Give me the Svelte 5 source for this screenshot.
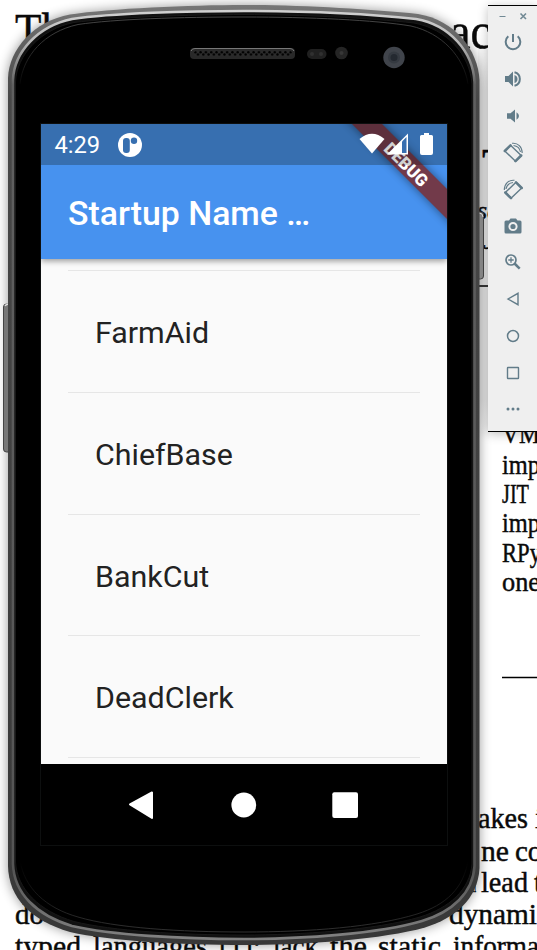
<script>
  const names = ['FarmAid', 'ChiefBase', 'BankCut', 'DeadClerk'];
  const tools = ['power', 'volumeUp', 'volumeDown', 'rotateLeft', 'rotateRight', 'camera', 'zoom', 'back', 'home', 'overview', 'more'];
  const lines = [
    { x: 15, y: 48, size: 50, text: 'Th', w: 48 },
    { x: 450, y: 48, size: 51, text: 'ac', w: 41 },
    { x: 482, y: 181, size: 46, text: 'T' },
    { x: 477, y: 219, size: 26, text: 'sc', italic: true },
    { x: 483, y: 249, size: 28, text: 'J', italic: true },
    { x: 502, y: 443, size: 26, text: 'VM', w: 38 },
    { x: 502, y: 474, size: 28, text: 'imp', w: 38 },
    { x: 502, y: 503, size: 27, text: 'JIT', w: 27 },
    { x: 502, y: 532, size: 28, text: 'imp', w: 38 },
    { x: 502, y: 562, size: 27, text: 'RPy', w: 39 },
    { x: 502, y: 591, size: 28, text: 'one', w: 38 },
    { x: 478, y: 828, size: 29, text: 'akes', w: 50 },
    { x: 535, y: 828, size: 29, text: 'it' },
    { x: 481, y: 861, size: 29, text: 'ne', w: 28 },
    { x: 515, y: 861, size: 29, text: 'com' },
    { x: 472, y: 892, size: 29, text: 'n', w: 4 },
    { x: 481, y: 892, size: 29, text: 'lead', w: 47 },
    { x: 534, y: 892, size: 29, text: 'to' },
    { x: 15, y: 924, size: 29, text: 'do' },
    { x: 449, y: 924, size: 29, text: 'dynami', w: 88 },
    { x: 15, y: 956, size: 29, text: 'typed', w: 66 },
    { x: 93, y: 956, size: 29, text: 'languages', w: 114 },
    { x: 219, y: 956, size: 29, text: '[1]:' },
    { x: 273, y: 956, size: 29, text: 'lack', w: 45 },
    { x: 330, y: 956, size: 29, text: 'the', w: 37 },
    { x: 378, y: 956, size: 29, text: 'static', w: 63 },
    { x: 453, y: 956, size: 29, text: 'informa', w: 86 }
  ];
  const outer = 'M8 78C9 49 34 21 70 14.500C110 8.500 190 5 244 5C300 5 370 9 418 14C455 20 478 50 479.500 80V868C478 899 455 918 425 927.500C380 940 300 945 244 945C180 945 110 941 70 932C30 920 9 898 8 866Z';
  const rim = 'M13 80C14 52 38 26 72 19C112 13 190 11 244 11C300 11 370 14 416 19C450 25 473 52 474.500 82V866C473 893 452 912 422 921C378 934 300 939 244 939C180 939 112 935 72 926C36 915 14 893 13 864Z';
  const glass = 'M15.500 82C16.500 55 41 29 74 22.500C112 17.500 190 14.500 244 14.500C300 14.500 370 18 414 23C447 29 470 55 472 84V864C470 890 449 908 420 917C376 930 300 935 244 935C180 935 112 931 74 921.500C39 911 17 889 15.500 862Z';
</script>

<main class="desktop">
  <svg class="layer" width="537" height="950" viewBox="0 0 537 950">
    <g class="paper">
      {#each lines as l}
        <text x={l.x} y={l.y} font-size={l.size} font-style={l.italic ? 'italic' : 'normal'} textLength={l.w} lengthAdjust="spacingAndGlyphs">{l.text}</text>
      {/each}
      <path d="M478 286H500M502 677.500H537" stroke="#000" stroke-width="1.300" />
    </g>
  </svg>

  <svg class="layer" width="537" height="950" viewBox="0 0 537 950">
    <defs>
      <linearGradient id="metal" x1="0" y1="5" x2="0" y2="945" gradientUnits="userSpaceOnUse">
        <stop offset="0" stop-color="#777" /><stop offset=".05" stop-color="#5c5c5c" />
        <stop offset=".1" stop-color="#484848" /><stop offset="1" stop-color="#383838" />
      </linearGradient>
      <linearGradient id="shine" x1="0" y1="5" x2="0" y2="945" gradientUnits="userSpaceOnUse">
        <stop offset="0" stop-color="#d5d5d5" /><stop offset=".04" stop-color="#b8b8b8" />
        <stop offset=".085" stop-color="#606060" /><stop offset=".92" stop-color="#555" /><stop offset="1" stop-color="#858585" />
      </linearGradient>
      <linearGradient id="bevel" x1="0" y1="15" x2="0" y2="935" gradientUnits="userSpaceOnUse">
        <stop offset="0" stop-color="#484848" /><stop offset=".04" stop-color="#2a2a2a" /><stop offset=".08" stop-color="#000" />
        <stop offset=".92" stop-color="#000" /><stop offset="1" stop-color="#333" />
      </linearGradient>
      <linearGradient id="gap" x1="0" y1="0" x2="0" y2="1">
        <stop offset="0" stop-color="#000" stop-opacity="0" /><stop offset=".15" stop-color="#000" stop-opacity=".08" />
        <stop offset=".9" stop-color="#000" stop-opacity=".08" /><stop offset="1" stop-color="#000" stop-opacity="0" />
      </linearGradient>
      <pattern id="mesh" x="194" y="51" width="5.300" height="5" patternUnits="userSpaceOnUse">
        <rect width="5.300" height="5" fill="#2b2b2b" /><circle cx="1.300" cy="1.300" r="1.200" fill="#000" /><circle cx="4" cy="3.500" r="1.200" fill="#000" />
      </pattern>
      <filter id="soft" x="-10%" y="-10%" width="120%" height="120%"><feGaussianBlur stdDeviation="6" /></filter>
    </defs>
    <rect x="478" y="30" width="12" height="410" fill="url(#gap)" />
    <path d={outer} fill="#000" opacity=".4" filter="url(#soft)" />
    <rect x="3.500" y="304" width="8" height="148" rx="3" fill="#777" stroke="#444" />
    <path d="M5 306q1-2 4-2" stroke="#ddd" stroke-width="1.500" fill="none" />
    <rect x="476" y="212" width="7.500" height="67" rx="3" fill="#888" stroke="#444" />
    <path d="M479 213q4 0 4 4" stroke="#ddd" fill="none" />
    <path d={outer} fill="url(#metal)" />
    <path d={rim} fill="#111" stroke="url(#shine)" stroke-width="2.600" />
    <path d={glass} fill="#000" stroke="#181818" stroke-width="1" />
    <path d="M20 84C23 56 44 32 78 24.500C115 19 180 17 244 17C310 17 375 20 411 26C442 33 464 57 468 84" fill="none" stroke="url(#bevel)" stroke-width="1" />
    <path d="M20 860C24 888 46 908 78 917C115 928 180 932 244 932C310 932 375 927 417 914C446 905 464 888 468 860" fill="none" stroke="url(#bevel)" stroke-width="1" />
    <rect x="190" y="48" width="105" height="11" rx="4" fill="#292929" />
    <path d="M191 51q1-2.500 4-2.500H290q3 0 4 2.500" fill="none" stroke="#777" stroke-width="1" />
    <rect x="194" y="51" width="98" height="5" rx="2" fill="url(#mesh)" />
    <rect x="307" y="49" width="19.500" height="10" rx="5" fill="#202020" />
    <circle cx="312" cy="54" r="2" fill="#303030" /><circle cx="321" cy="54" r="2" fill="#303030" />
    <circle cx="341.500" cy="53" r="6.300" fill="#252525" /><circle cx="341.500" cy="53" r="2" fill="#373737" />
    <circle cx="394" cy="57.500" r="10.700" fill="#40444b" /><circle cx="394" cy="57.500" r="6" fill="#353a41" /><circle cx="394" cy="57.500" r="3.500" fill="#242930" />
  </svg>

  <section class="screen">
    <header>
      <div class="status">
        <time>4:29</time>
        <svg width="24" height="24" viewBox="0 0 24 24"><circle cx="12" cy="12" r="12" fill="#fff" /><rect x="5" y="5" width="6.800" height="15" rx="3" fill="#376fb0" /><circle cx="16" cy="7.700" r="3.200" fill="#376fb0" /></svg>
      </div>
      <h1>Startup Name …</h1>
    </header>
    <ul>
      {#each names as name}
        <li>{name}</li>
      {/each}
      <li class="last"></li>
    </ul>
    <nav>
      <svg width="406" height="80" viewBox="0 0 406 80" fill="#fff">
        <path d="M89 40.500 111 28.500V54Z" stroke="#fff" stroke-width="2" stroke-linejoin="round" />
        <circle cx="202.800" cy="41" r="12.400" /><rect x="291.300" y="28.300" width="25.700" height="25.700" rx="2" />
      </svg>
    </nav>
    <svg class="banner" width="110" height="110" viewBox="337 124 110 110">
      <defs><filter id="ribbonShadow" x="-20%" y="-20%" width="140%" height="140%"><feGaussianBlur stdDeviation="5" /></filter></defs>
      <path d="M342 114H372L457 199V229Z" fill="#000" opacity=".48" filter="url(#ribbonShadow)" />
      <path d="M352 124H382L447 189V219Z" fill="#723a4a" />
      <text x="406" y="170.500" transform="rotate(45 406 164.500)" text-anchor="middle" textLength="54" lengthAdjust="spacingAndGlyphs">DEBUG</text>
      <path d="M352 124H382L423 165H393Z" fill="#000" opacity=".18" />
      <path d="M359.500 139Q372 128.500 384.500 139L372 153.500Z" fill="#fff" />
      <path d="M387 154.500 408 133.500V154.500Z" fill="#fff" />
      <path d="M402 141.500 406.500 137V153H402Z" fill="#376fb0" />
      <path d="M421.500 135H424V133H429V135H431.500Q433 135 433 136.500V153Q433 155 431 155H422Q420 155 420 153V136.500Q420 135 421.500 135Z" fill="#fff" />
    </svg>
  </section>

  <aside>
    <div class="window">
      <svg width="49" height="24" viewBox="488 6 49 24" fill="none" stroke="#718994"><path d="M499.500 16.500H505.500" /><path d="M520.500 13.500 526 19M526 13.500 520.500 19" stroke-width="1.600" /></svg>
    </div>
    {#each tools as tool}
      <div class="tool">
        <svg width="24" height="24" viewBox="0 0 24 24" fill="none" stroke="#627c89" stroke-width="1.700">
          {#if tool === 'power'}
            <path d="M12 4V12M7.300 6.300A7.300 7.300 0 1 0 16.700 6.300" stroke-width="2" />
          {:else if tool === 'volumeUp'}
            <path d="M4 9V15H7.500L12 19.500V4.500L7.500 9Z" fill="#627c89" stroke="none" /><path d="M13.500 8Q16.500 9 16.500 12T13.500 16Z" fill="#627c89" stroke="none" /><path d="M13.500 5.200A7 7 0 0 1 13.500 18.800" stroke-width="2" />
          {:else if tool === 'volumeDown'}
            <path d="M6 9.200V14.800H9.500L14 18.500V5.500L9.500 9.200Z" fill="#627c89" stroke="none" /><path d="M15.500 8.200Q18 10 18 12T15.500 15.800Z" fill="#627c89" stroke="none" />
          {:else if tool === 'rotateLeft' || tool === 'rotateRight'}
            <g transform={tool === 'rotateRight' ? 'translate(24.500 0) scale(-1 1)' : ''}>
              <path d="M3.800 11 9.500 5.300 20.200 15.500 14.500 21.200Z" stroke-width="1.400" stroke-linejoin="round" />
              <path d="M3.800 11 9.500 5.300M20.200 15.500 14.500 21.200" stroke-width="2.500" stroke-linecap="round" />
              <path d="M11 3.300C17 2.500 21.200 7 21.200 13M12.500 5.500C16.500 6 18.800 8.500 19.500 12" stroke-width="1.100" />
            </g>
          {:else if tool === 'camera'}
            <path d="M5 6.500H8L9.500 4.500H15L16.500 6.500H19Q20.500 6.500 20.500 8V18Q20.500 19.500 19 19.500H5Q3.500 19.500 3.500 18V8Q3.500 6.500 5 6.500Z" fill="#627c89" stroke="none" /><circle cx="12" cy="12.500" r="3.600" fill="#627c89" stroke="#efefef" stroke-width="2" />
          {:else if tool === 'zoom'}
            <circle cx="10" cy="10" r="5" /><path d="M13.500 13.500 18.700 18.700" stroke-width="2.500" /><path d="M7.300 10H12.700M10 7.300V12.700" stroke-width="1.300" />
          {:else if tool === 'back'}
            <path d="M7 12 17 6.300V17.700Z" stroke-width="1.400" />
          {:else if tool === 'home'}
            <circle cx="12" cy="12" r="5.500" stroke-width="1.500" />
          {:else if tool === 'overview'}
            <rect x="6.500" y="6.500" width="11" height="11" rx=".5" stroke-width="1.400" />
          {:else}
            <g fill="#627c89" stroke="none"><circle cx="7" cy="12" r="1.500" /><circle cx="12" cy="12" r="1.500" /><circle cx="17" cy="12" r="1.500" /></g>
          {/if}
        </svg>
      </div>
    {/each}
  </aside>
</main>

<style>
  :global(body) { margin: 0; background: #fff; }
  .desktop { position: relative; width: 537px; height: 950px; overflow: hidden; background: #fff; }
  .layer { position: absolute; inset: 0; }
  .paper text { font-family: 'Liberation Serif', serif; fill: #0a0a0a; stroke: #0a0a0a; stroke-width: .45px; }
  .screen { position: absolute; left: 41px; top: 124px; width: 406px; height: 721px; display: flex; flex-direction: column; background: #fafafa; overflow: hidden; font-family: Roboto, sans-serif; outline: 1px solid #0d0f0f; }
  header { position: relative; height: 135px; flex: none; background: #4792ef; box-shadow: 0 2px 6px rgba(0, 0, 0, .4); }
  .status { height: 41px; box-sizing: border-box; display: flex; align-items: center; gap: 18px; padding-left: 13.500px; background: #376fb0; color: #fff; }
  time { font-size: 23.700px; line-height: 42px; }
  h1 { margin: 0; padding-left: 27px; height: 94px; line-height: 97px; font-size: 33.800px; font-weight: 500; color: #fff; white-space: pre; }
  ul { list-style: none; margin: 0; padding: 11px 27px 0; flex: 1; min-height: 0; overflow: hidden; }
  li { height: 121.750px; box-sizing: border-box; border-top: 1.500px solid #e6e6e6; padding-left: 27px; line-height: 123px; font-size: 30.400px; color: #222; }
  nav { height: 81px; flex: none; background: #000; }
  nav svg, .window svg, .tool svg { display: block; }
  .banner { position: absolute; top: 0; right: 0; }
  .banner text { font: 900 17.300px Roboto, sans-serif; fill: #fff; }
  aside { position: absolute; left: 488px; top: 5px; width: 49px; height: 427px; box-sizing: border-box; display: flex; flex-direction: column; background: #efefef; border-top: 1px solid #000; border-bottom: 1px solid #000; box-shadow: 0 2px 10px rgba(0, 0, 0, .25); }
  .window { height: 18px; flex: none; }
  .tool { height: 36.700px; flex: none; display: flex; align-items: center; justify-content: center; }
</style>
